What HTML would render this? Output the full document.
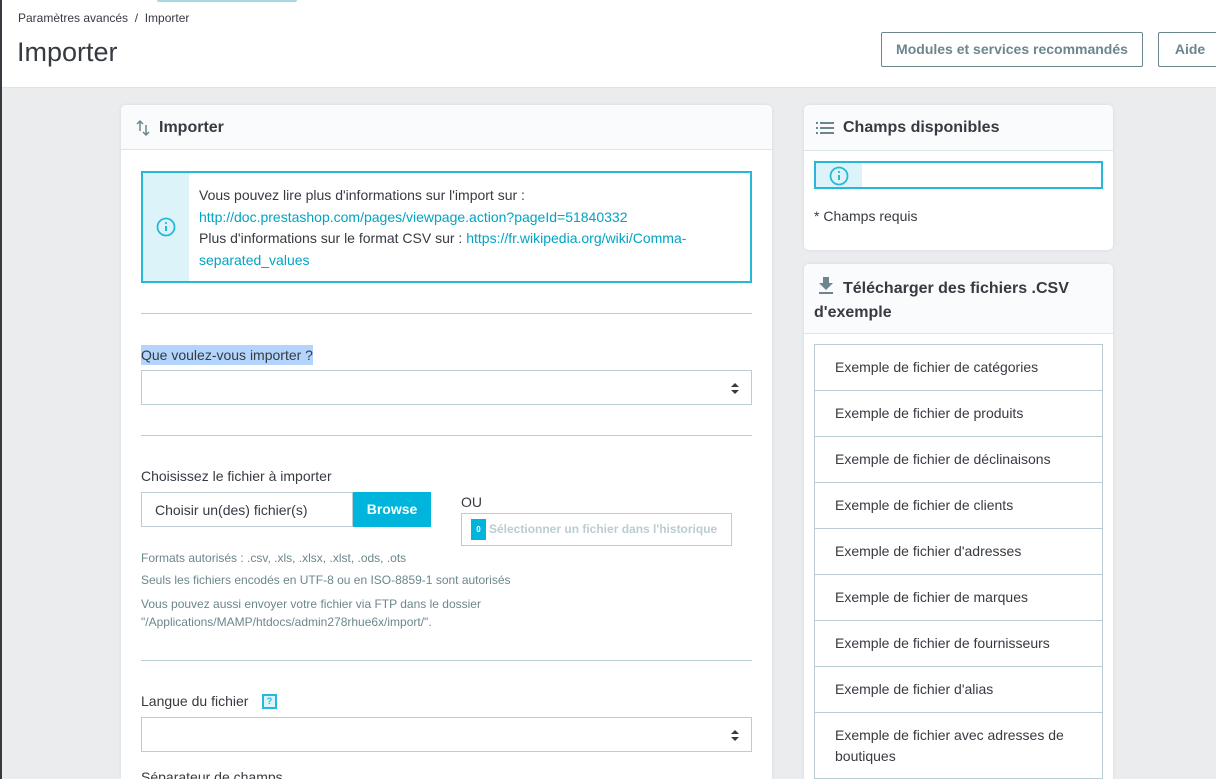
<!DOCTYPE html>
<html><head><meta charset="utf-8"><style>
*{box-sizing:border-box;margin:0;padding:0}
html{width:1216px;height:779px;overflow:hidden}
body{width:1216px;height:779px;overflow:hidden;background:#eaecee;font-family:"Liberation Sans",sans-serif;color:#363a41;position:relative;font-size:13px}
.strip{position:absolute;left:0;top:0;width:2px;height:779px;background:#363a41}
.head{position:absolute;left:2px;top:0;width:1214px;height:88px;background:#fff;border-bottom:1px solid #dfe3e6}
.topbar{position:absolute;left:155px;top:0;width:140px;height:2px;background:#a9d8e2;border-radius:0 0 3px 3px}
.bc{position:absolute;left:16px;top:11px;font-size:12px;color:#363a41}
.title{position:absolute;left:15px;top:37px;font-size:27px;color:#363a41}
.btn{position:absolute;top:32px;height:35px;border:1px solid #6c868e;color:#6c868e;font-weight:bold;font-size:14px;line-height:33px;text-align:center;background:#fff;border-radius:2px}
.card{position:absolute;background:#fff;border-radius:5px;box-shadow:0 0 3px #d6dadd}
.ch{background:#fafbfc;border-bottom:1px solid #dbe6e9;font-size:16px;font-weight:bold;color:#363a41;border-radius:5px 5px 0 0}
.a{color:#00a4c4}
.alert{position:absolute;border:2px solid #25b9d7;background:#fff}
.alert .ic{position:absolute;left:0;top:0;bottom:0;width:46px;background:#dcf4f9}
.hr{position:absolute;height:1px;background:#bbcdd2}
.sel{position:absolute;border:1px solid #bbcdd2;background:#fff}
.sel:after{content:"";position:absolute;right:12px;top:12px;border:4px solid transparent;border-bottom:4px solid #363a41;border-top:0}
.sel:before{content:"";position:absolute;right:12px;top:19px;border:4px solid transparent;border-top:4px solid #363a41;border-bottom:0}
.small{position:absolute;font-size:12px;color:#6c868e}
.li{position:absolute;left:10px;width:289px;height:46px;border:1px solid #bbcdd2;border-top:none;padding-left:20px;line-height:45px;font-size:14px;color:#363a41}
</style></head><body>
<div class="strip"></div>
<div class="head">
<div class="topbar"></div>
<div class="bc">Paramètres avancés &nbsp;/&nbsp; Importer</div>
<div class="title">Importer</div>
<div class="btn" style="left:879px;width:262px">Modules et services recommandés</div>
<div class="btn" style="left:1156px;width:64px">Aide</div>
</div>

<div class="card" style="left:121px;top:105px;width:651px;height:674px;border-radius:5px 5px 0 0">
<div class="ch" style="height:45px;padding:14px 0 0 38px">Importer
<svg style="position:absolute;left:15px;top:14px" width="14" height="18" viewBox="0 0 14 18"><path d="M4 2v10M1 5l3-3 3 3" stroke="#6c868e" stroke-width="1.5" fill="none"/><path d="M10 6v10M7 13l3 3 3-3" stroke="#6c868e" stroke-width="1.5" fill="none"/></svg></div>
<div class="alert" style="left:20px;top:66px;width:611px;height:112px">
<div class="ic"><svg style="position:absolute;left:13px;top:44px" width="20" height="20" viewBox="0 0 20 20"><circle cx="10" cy="10" r="8.5" stroke="#25b9d7" stroke-width="1.8" fill="none"/><path d="M10 9v5" stroke="#25b9d7" stroke-width="2"/><circle cx="10" cy="6" r="1.1" fill="#25b9d7"/></svg></div>
<div style="position:absolute;left:56px;top:12px;width:540px;font-size:14px;line-height:21.5px">Vous pouvez lire plus d'informations sur l'import sur :<br><span class="a">http://doc.prestashop.com/pages/viewpage.action?pageId=51840332</span><br>Plus d'informations sur le format CSV sur : <span class="a">https://fr.wikipedia.org/wiki/Comma-separated_values</span></div>
</div>
<div class="hr" style="left:20px;top:208px;width:611px"></div>
<div style="position:absolute;left:20px;top:240px;font-size:14px;background:#b3d4fc;padding:1px 0;line-height:18px">Que voulez-vous importer ?</div>
<div class="sel" style="left:20px;top:265px;width:611px;height:35px"></div>
<div class="hr" style="left:20px;top:330px;width:611px"></div>
<div style="position:absolute;left:20px;top:363px;font-size:14px">Choisissez le fichier à importer</div>
<div style="position:absolute;left:20px;top:387px;width:212px;height:35px;border:1px solid #bbcdd2;padding:9px 13px;font-size:14px">Choisir un(des) fichier(s)</div>
<div style="position:absolute;left:232px;top:387px;width:78px;height:35px;background:#00b5dc;color:#fff;font-weight:bold;font-size:14px;line-height:34px;text-align:center">Browse</div>
<div style="position:absolute;left:340px;top:389px;font-size:14px">OU</div>
<div style="position:absolute;left:340px;top:408px;width:271px;height:33px;border:1px solid #bbcdd2">
<div style="position:absolute;left:9px;top:5px;width:15px;height:21px;background:#00b5dc;color:#fff;font-size:8px;font-weight:bold;text-align:center;line-height:21px">0</div>
<div style="position:absolute;left:27px;top:8px;font-size:12px;font-weight:bold;color:#bbcdd2">Sélectionner un fichier dans l'historique</div></div>
<div class="small" style="left:20px;top:446px">Formats autorisés : .csv, .xls, .xlsx, .xlst, .ods, .ots</div>
<div class="small" style="left:20px;top:468px">Seuls les fichiers encodés en UTF-8 ou en ISO-8859-1 sont autorisés</div>
<div class="small" style="left:20px;top:490px;line-height:18px">Vous pouvez aussi envoyer votre fichier via FTP dans le dossier<br>"/Applications/MAMP/htdocs/admin278rhue6x/import/".</div>
<div class="hr" style="left:20px;top:555px;width:611px"></div>
<div style="position:absolute;left:20px;top:588px;font-size:14px">Langue du fichier</div>
<div style="position:absolute;left:141px;top:589px;width:15px;height:15px;border:2px solid #25b9d7;background:#dcf4f9;color:#25b9d7;font-size:9px;text-align:center;line-height:11px;font-weight:bold">?</div>
<div class="sel" style="left:20px;top:612px;width:611px;height:35px"></div>
<div style="position:absolute;left:20px;top:664px;font-size:14px">Séparateur de champs</div>
</div>

<div class="card" style="left:804px;top:105px;width:309px;height:145px">
<div class="ch" style="height:46px;padding:14px 0 0 39px">Champs disponibles
<svg style="position:absolute;left:12px;top:17px" width="18" height="12" viewBox="0 0 18 12"><g fill="#6c868e"><rect x="0" y="0" width="2" height="2"/><rect x="0" y="5" width="2" height="2"/><rect x="0" y="10" width="2" height="2"/><rect x="4" y="0" width="14" height="2"/><rect x="4" y="5" width="14" height="2"/><rect x="4" y="10" width="14" height="2"/></g></svg></div>
<div class="alert" style="left:10px;top:56px;width:289px;height:28px"><div class="ic" style="width:46px"><svg style="position:absolute;left:13px;top:3px" width="20" height="20" viewBox="0 0 20 20"><circle cx="10" cy="10" r="8.5" stroke="#25b9d7" stroke-width="1.8" fill="none"/><path d="M10 9v5" stroke="#25b9d7" stroke-width="2"/><circle cx="10" cy="6" r="1.1" fill="#25b9d7"/></svg></div></div>
<div style="position:absolute;left:10px;top:103px;font-size:14px">* Champs requis</div>
</div>

<div class="card" style="left:804px;top:264px;width:309px;height:515px;border-radius:5px 5px 0 0">
<div class="ch" style="height:70px;padding:13px 10px 0 10px;line-height:24px"><span style="display:inline-block;width:29px"></span>Télécharger des fichiers .CSV d'exemple
<svg style="position:absolute;left:14px;top:13px" width="16" height="18" viewBox="0 0 16 18"><path d="M5 0h6v6h4l-7 7-7-7h4z" fill="#6c868e"/><rect x="1" y="15" width="14" height="2" fill="#6c868e"/></svg></div>
<div class="li" style="top:80px;border-top:1px solid #bbcdd2;height:47px">Exemple de fichier de catégories</div>
<div class="li" style="top:127px">Exemple de fichier de produits</div>
<div class="li" style="top:173px">Exemple de fichier de déclinaisons</div>
<div class="li" style="top:219px">Exemple de fichier de clients</div>
<div class="li" style="top:265px">Exemple de fichier d'adresses</div>
<div class="li" style="top:311px">Exemple de fichier de marques</div>
<div class="li" style="top:357px">Exemple de fichier de fournisseurs</div>
<div class="li" style="top:403px">Exemple de fichier d'alias</div>
<div class="li" style="top:449px;height:66px;line-height:21px;padding-top:12px">Exemple de fichier avec adresses de boutiques</div>
</div>
</body></html>
